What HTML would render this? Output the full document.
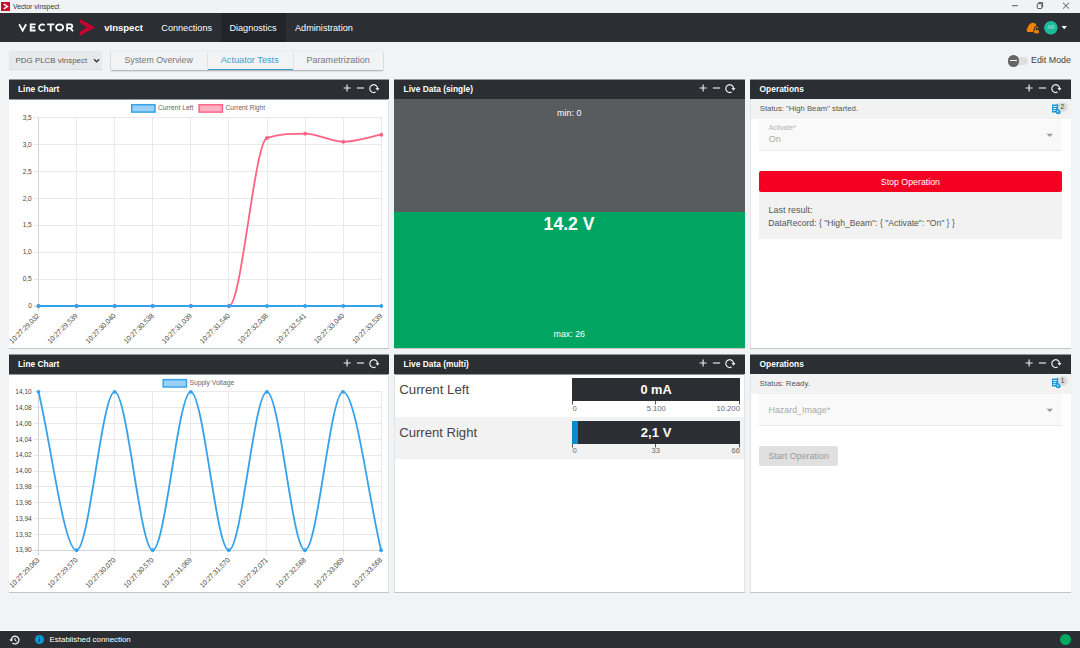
<!DOCTYPE html>
<html><head><meta charset="utf-8">
<style>
*{box-sizing:border-box}
html,body{margin:0;padding:0}
body{width:1080px;height:648px;overflow:hidden;position:relative;background:#f2f3f5;font-family:"Liberation Sans", sans-serif;}
.abs{position:absolute}
.t{position:absolute;white-space:nowrap;line-height:1}
.panel{position:absolute;background:#fff;border-bottom:1px solid #c4c4c4}
.pl{position:absolute;width:1px;background:#e2e3e5}
.ph{position:absolute;left:0;right:0;top:0;height:20px;background:#2b2e33;transform:translateY(0.5px)}
.ph .t{color:#fff;font-weight:bold;font-size:8.4px}
</style></head><body>
<!-- title bar -->
<div class="abs" style="left:0;top:0;width:1080px;height:13px;background:#f0f2f4"></div>
<div class="abs" style="left:1px;top:2px;width:9px;height:9px;background:#c8102e"></div>
<svg class="abs" style="left:1px;top:2px" width="9" height="9" viewBox="0 0 9 9"><path d="M2.8 2.2 L6.4 4.5 L2.8 6.8" fill="none" stroke="#fff" stroke-width="1.4"/></svg>
<div class="t" style="left:13px;top:3.9px;font-size:6.8px;color:#333">Vector vInspect</div>
<svg class="abs" style="left:1008px;top:0" width="72" height="13" viewBox="0 0 72 13">
 <path d="M4 5.7h5.8" stroke="#444" stroke-width="0.9"/>
 <rect x="29.3" y="3.7" width="4.6" height="4.8" rx="0.8" fill="none" stroke="#444" stroke-width="0.9"/>
 <path d="M30.6 3.2 v-0.6 h4 v4.4 h-0.6" fill="none" stroke="#444" stroke-width="0.9"/>
 <path d="M55 2.8 L61 8.6 M61 2.8 L55 8.6" stroke="#444" stroke-width="0.9"/>
</svg>
<!-- navbar -->
<div class="abs" style="left:0;top:13px;width:1080px;height:29px;background:#2b2e33"></div>
<div class="abs" style="left:221px;top:13px;width:65px;height:29px;background:#212428"></div>
<svg class="abs" style="left:0;top:13px" width="110" height="29" viewBox="0 13 110 29">
 <g fill="none" stroke="#fff" stroke-width="1.8" stroke-linejoin="miter">
  <path d="M19.2 24.2 L22.65 30.6 L26.1 24.2"/>
  <path d="M35.6 24.4 H30.7 V30.5 H35.6 M30.7 27.45 H35"/>
  <path d="M44.6 25.4 A3.1 3.1 0 1 0 44.6 29.5"/>
  <path d="M47.1 24.4 H54.3 M50.7 24.4 V31.3"/>
  <ellipse cx="59.6" cy="27.45" rx="3.55" ry="3.05"/>
  <path d="M67.1 31.3 V24.4 H70.4 A1.85 1.85 0 0 1 70.4 28.1 H67.1 M70 28.1 L73.1 31.2"/>
 </g>
 <path d="M79.6 18.8 L95.1 27.45 L79.6 36.1 L79.6 32.1 L86.9 27.45 L79.6 22.6 Z" fill="#c8002d"/>
</svg>
<div class="t" style="left:104.3px;top:23px;font-size:9.5px;font-weight:bold;color:#fff">vInspect</div>
<div class="t" style="left:161.3px;top:24.3px;font-size:9.15px;color:#fff">Connections</div>
<div class="t" style="left:229.4px;top:24.3px;font-size:9.15px;color:#fff">Diagnostics</div>
<div class="t" style="left:295px;top:24.3px;font-size:9.15px;color:#fff">Administration</div>
<svg class="abs" style="left:1024px;top:19px" width="46" height="18" viewBox="0 0 46 18">
 <path d="M4.2 12.9 C2.4 12.9 2.2 9.8 3.6 9.2 C3.9 6.8 5.3 4.6 7.8 3.9 C10.2 3.6 12.2 4.6 12.4 6.4 C12.2 8.2 11.2 9.6 10.6 10.4 L9.8 12.9 Z" fill="#f08300"/>
 <path d="M11.4 11.3 v-1.9 a1.35 1.35 0 0 1 2.7 0 v0.2" fill="none" stroke="#2b2e33" stroke-width="2.6"/>
 <rect x="10.2" y="11.2" width="4.7" height="3.1" fill="#2b2e33" stroke="#2b2e33" stroke-width="1.6"/>
 <path d="M11.4 11.3 v-1.9 a1.35 1.35 0 0 1 2.7 0 v0.2" fill="none" stroke="#f08300" stroke-width="1.0"/>
 <rect x="10.2" y="11.2" width="4.7" height="3.1" fill="#f08300"/>
 <circle cx="26.85" cy="8.65" r="6.75" fill="#1bbc9b"/>
 <path d="M37.5 7 L43 7 L40.25 10.2 Z" fill="#fff"/>
</svg>
<div class="t" style="left:1047.2px;top:25.3px;font-size:5.3px;color:#a6e4d6">AR</div>
<!-- sub bar -->
<div class="abs" style="left:9px;top:51px;width:93px;height:19px;background:#e8e9eb;border-bottom:1px solid #dcdde0"></div>
<div class="t" style="left:15.6px;top:57.4px;font-size:7.9px;color:#5c5c5c">PDG PLCB vInspect</div>
<svg class="abs" style="left:93px;top:58px" width="8" height="6" viewBox="0 0 8 6"><path d="M1 1.2 L3.6 3.8 L6.2 1.2" fill="none" stroke="#333" stroke-width="1.3"/></svg>
<div class="abs" style="left:111px;top:51px;width:272px;height:19px;background:#f2f3f5;box-shadow:0 1px 1.5px rgba(0,0,0,0.3),0 0 1px rgba(0,0,0,0.12)"></div>
<div class="abs" style="left:207px;top:51px;width:1px;height:19px;background:#e2e3e5"></div>
<div class="abs" style="left:293px;top:51px;width:1px;height:19px;background:#e2e3e5"></div>
<div class="abs" style="left:208px;top:68.5px;width:85px;height:1.6px;background:#3a9fd0"></div>
<div class="t" style="left:124.4px;top:56.2px;font-size:8.8px;color:#777">System Overview</div>
<div class="t" style="left:220.7px;top:56.2px;font-size:9.2px;color:#3a9fd0">Actuator Tests</div>
<div class="t" style="left:306.5px;top:56.2px;font-size:9.05px;color:#777">Parametrization</div>
<div class="abs" style="left:1008px;top:57px;width:20px;height:8px;border-radius:4px;background:#dfdfe0"></div>
<div class="abs" style="left:1007.8px;top:55.2px;width:11.4px;height:11.4px;border-radius:50%;background:#666"></div>
<div class="abs" style="left:1010.3px;top:60.3px;width:6.4px;height:1.2px;background:#fff"></div>
<div class="t" style="left:1031px;top:56.2px;font-size:8.9px;color:#444">Edit Mode</div>

<!-- panels row 1 -->
<div class="panel" style="left:9px;top:79px;width:380px;height:270px"><div class="ph"><div class="t" style="left:9px;top:4.8px">Line Chart</div></div></div>
<div class="panel" style="left:394px;top:79px;width:351px;height:270px"><div class="ph"><div class="t" style="left:9.6px;top:4.8px">Live Data (single)</div></div>
  <div class="abs" style="left:0;top:20px;width:351px;height:113px;background:#585c5f"></div>
  <div class="abs" style="left:0;top:133px;width:351px;height:136px;background:#00a562"></div>
</div>
<div class="panel" style="left:750px;top:79px;width:321px;height:270px"><div class="ph"><div class="t" style="left:9.6px;top:4.8px">Operations</div></div>
  <div class="abs" style="left:0;top:20px;width:321px;height:20px;background:#f2f2f2"></div>
</div>
<!-- panels row 2 -->
<div class="panel" style="left:9px;top:354px;width:380px;height:239px"><div class="ph"><div class="t" style="left:9px;top:4.8px">Line Chart</div></div></div>
<div class="panel" style="left:394px;top:354px;width:351px;height:239px"><div class="ph"><div class="t" style="left:9.6px;top:4.8px">Live Data (multi)</div></div>
  <div class="abs" style="left:0;top:63px;width:351px;height:42px;background:#f2f2f2"></div>
</div>
<div class="panel" style="left:750px;top:354px;width:321px;height:239px"><div class="ph"><div class="t" style="left:9.6px;top:4.8px">Operations</div></div>
  <div class="abs" style="left:0;top:20px;width:321px;height:20px;background:#f2f2f2"></div>
</div>

<svg class="abs" style="left:341px;top:80.4px" width="48" height="16" viewBox="341 80.4 48 16">
 <path d="M347.10 84.90v7M343.60 88.40h7" stroke="#eee" stroke-width="1.15"/>
 <path d="M356.90 88.40h7.2" stroke="#eee" stroke-width="1.15"/>
 <path d="M375.60 92.45 A3.9 3.9 0 1 1 377.60 88.70" fill="none" stroke="#eee" stroke-width="1.2"/>
 <path d="M375.50 88.40 L379.50 88.40 L377.50 91.10 Z" fill="#eee"/>
</svg>

<svg class="abs" style="left:697px;top:80.4px" width="48" height="16" viewBox="697 80.4 48 16">
 <path d="M703.10 84.90v7M699.60 88.40h7" stroke="#eee" stroke-width="1.15"/>
 <path d="M712.90 88.40h7.2" stroke="#eee" stroke-width="1.15"/>
 <path d="M731.60 92.45 A3.9 3.9 0 1 1 733.60 88.70" fill="none" stroke="#eee" stroke-width="1.2"/>
 <path d="M731.50 88.40 L735.50 88.40 L733.50 91.10 Z" fill="#eee"/>
</svg>

<svg class="abs" style="left:1023px;top:80.4px" width="48" height="16" viewBox="1023 80.4 48 16">
 <path d="M1029.10 84.90v7M1025.60 88.40h7" stroke="#eee" stroke-width="1.15"/>
 <path d="M1038.90 88.40h7.2" stroke="#eee" stroke-width="1.15"/>
 <path d="M1057.60 92.45 A3.9 3.9 0 1 1 1059.60 88.70" fill="none" stroke="#eee" stroke-width="1.2"/>
 <path d="M1057.50 88.40 L1061.50 88.40 L1059.50 91.10 Z" fill="#eee"/>
</svg>

<svg class="abs" style="left:341px;top:355.4px" width="48" height="16" viewBox="341 355.4 48 16">
 <path d="M347.10 359.90v7M343.60 363.40h7" stroke="#eee" stroke-width="1.15"/>
 <path d="M356.90 363.40h7.2" stroke="#eee" stroke-width="1.15"/>
 <path d="M375.60 367.45 A3.9 3.9 0 1 1 377.60 363.70" fill="none" stroke="#eee" stroke-width="1.2"/>
 <path d="M375.50 363.40 L379.50 363.40 L377.50 366.10 Z" fill="#eee"/>
</svg>

<svg class="abs" style="left:697px;top:355.4px" width="48" height="16" viewBox="697 355.4 48 16">
 <path d="M703.10 359.90v7M699.60 363.40h7" stroke="#eee" stroke-width="1.15"/>
 <path d="M712.90 363.40h7.2" stroke="#eee" stroke-width="1.15"/>
 <path d="M731.60 367.45 A3.9 3.9 0 1 1 733.60 363.70" fill="none" stroke="#eee" stroke-width="1.2"/>
 <path d="M731.50 363.40 L735.50 363.40 L733.50 366.10 Z" fill="#eee"/>
</svg>

<svg class="abs" style="left:1023px;top:355.4px" width="48" height="16" viewBox="1023 355.4 48 16">
 <path d="M1029.10 359.90v7M1025.60 363.40h7" stroke="#eee" stroke-width="1.15"/>
 <path d="M1038.90 363.40h7.2" stroke="#eee" stroke-width="1.15"/>
 <path d="M1057.60 367.45 A3.9 3.9 0 1 1 1059.60 363.70" fill="none" stroke="#eee" stroke-width="1.2"/>
 <path d="M1057.50 363.40 L1061.50 363.40 L1059.50 366.10 Z" fill="#eee"/>
</svg>

<div class="pl" style="left:388px;top:99px;height:249px"></div>
<div class="pl" style="left:750px;top:99px;height:249px"></div>
<div class="pl" style="left:388px;top:374px;height:218px"></div>
<div class="pl" style="left:394px;top:374px;height:218px"></div>
<div class="pl" style="left:744px;top:374px;height:218px"></div>
<div class="pl" style="left:750px;top:374px;height:218px"></div>
<!-- charts -->
<svg class="abs" style="left:0;top:0" width="1080" height="648" viewBox="0 0 1080 648" font-family='"Liberation Sans", sans-serif'>
<line x1="33.5" y1="117.5" x2="381.8" y2="117.5" stroke="#e9e9e9" stroke-width="1"/>
<line x1="33.5" y1="144.5" x2="381.8" y2="144.5" stroke="#e9e9e9" stroke-width="1"/>
<line x1="33.5" y1="171.5" x2="381.8" y2="171.5" stroke="#e9e9e9" stroke-width="1"/>
<line x1="33.5" y1="198.5" x2="381.8" y2="198.5" stroke="#e9e9e9" stroke-width="1"/>
<line x1="33.5" y1="225.5" x2="381.8" y2="225.5" stroke="#e9e9e9" stroke-width="1"/>
<line x1="33.5" y1="252.5" x2="381.8" y2="252.5" stroke="#e9e9e9" stroke-width="1"/>
<line x1="33.5" y1="279.5" x2="381.8" y2="279.5" stroke="#e9e9e9" stroke-width="1"/>
<line x1="33.5" y1="306.5" x2="381.8" y2="306.5" stroke="#e9e9e9" stroke-width="1"/>
<line x1="38.5" y1="117.0" x2="38.5" y2="311.0" stroke="#e9e9e9" stroke-width="1"/>
<line x1="76.5" y1="117.0" x2="76.5" y2="311.0" stroke="#e9e9e9" stroke-width="1"/>
<line x1="114.5" y1="117.0" x2="114.5" y2="311.0" stroke="#e9e9e9" stroke-width="1"/>
<line x1="152.5" y1="117.0" x2="152.5" y2="311.0" stroke="#e9e9e9" stroke-width="1"/>
<line x1="190.5" y1="117.0" x2="190.5" y2="311.0" stroke="#e9e9e9" stroke-width="1"/>
<line x1="228.5" y1="117.0" x2="228.5" y2="311.0" stroke="#e9e9e9" stroke-width="1"/>
<line x1="267.5" y1="117.0" x2="267.5" y2="311.0" stroke="#e9e9e9" stroke-width="1"/>
<line x1="305.5" y1="117.0" x2="305.5" y2="311.0" stroke="#e9e9e9" stroke-width="1"/>
<line x1="343.5" y1="117.0" x2="343.5" y2="311.0" stroke="#e9e9e9" stroke-width="1"/>
<line x1="381.5" y1="117.0" x2="381.5" y2="311.0" stroke="#e9e9e9" stroke-width="1"/>
<line x1="38.5" y1="117.0" x2="38.5" y2="311.0" stroke="#d4d4d4" stroke-width="1"/>
<line x1="33.5" y1="306.5" x2="381.8" y2="306.5" stroke="#d4d4d4" stroke-width="1"/>
<text x="31.8" y="119.7" text-anchor="end" font-size="7.3" fill="#4a4a4a" textLength="9.17" lengthAdjust="spacingAndGlyphs">3,5</text>
<text x="31.8" y="146.6" text-anchor="end" font-size="7.3" fill="#4a4a4a" textLength="9.17" lengthAdjust="spacingAndGlyphs">3,0</text>
<text x="31.8" y="173.6" text-anchor="end" font-size="7.3" fill="#4a4a4a" textLength="9.17" lengthAdjust="spacingAndGlyphs">2,5</text>
<text x="31.8" y="200.5" text-anchor="end" font-size="7.3" fill="#4a4a4a" textLength="9.17" lengthAdjust="spacingAndGlyphs">2,0</text>
<text x="31.8" y="227.4" text-anchor="end" font-size="7.3" fill="#4a4a4a" textLength="9.17" lengthAdjust="spacingAndGlyphs">1,5</text>
<text x="31.8" y="254.3" text-anchor="end" font-size="7.3" fill="#4a4a4a" textLength="9.17" lengthAdjust="spacingAndGlyphs">1,0</text>
<text x="31.8" y="281.3" text-anchor="end" font-size="7.3" fill="#4a4a4a" textLength="9.17" lengthAdjust="spacingAndGlyphs">0,5</text>
<text x="31.8" y="308.2" text-anchor="end" font-size="7.3" fill="#4a4a4a" textLength="3.67" lengthAdjust="spacingAndGlyphs">0</text>
<text transform="translate(40.0,316.3) rotate(-45)" text-anchor="end" font-size="7.2" fill="#444" textLength="39.11" lengthAdjust="spacingAndGlyphs">10:27:29,032</text>
<text transform="translate(78.1,316.3) rotate(-45)" text-anchor="end" font-size="7.2" fill="#444" textLength="39.11" lengthAdjust="spacingAndGlyphs">10:27:29,539</text>
<text transform="translate(116.2,316.3) rotate(-45)" text-anchor="end" font-size="7.2" fill="#444" textLength="39.11" lengthAdjust="spacingAndGlyphs">10:27:30,040</text>
<text transform="translate(154.3,316.3) rotate(-45)" text-anchor="end" font-size="7.2" fill="#444" textLength="39.11" lengthAdjust="spacingAndGlyphs">10:27:30,538</text>
<text transform="translate(192.4,316.3) rotate(-45)" text-anchor="end" font-size="7.2" fill="#444" textLength="39.11" lengthAdjust="spacingAndGlyphs">10:27:31,039</text>
<text transform="translate(230.4,316.3) rotate(-45)" text-anchor="end" font-size="7.2" fill="#444" textLength="39.11" lengthAdjust="spacingAndGlyphs">10:27:31,540</text>
<text transform="translate(268.5,316.3) rotate(-45)" text-anchor="end" font-size="7.2" fill="#444" textLength="39.11" lengthAdjust="spacingAndGlyphs">10:27:32,038</text>
<text transform="translate(306.6,316.3) rotate(-45)" text-anchor="end" font-size="7.2" fill="#444" textLength="39.11" lengthAdjust="spacingAndGlyphs">10:27:32,541</text>
<text transform="translate(344.7,316.3) rotate(-45)" text-anchor="end" font-size="7.2" fill="#444" textLength="39.11" lengthAdjust="spacingAndGlyphs">10:27:33,040</text>
<text transform="translate(382.8,316.3) rotate(-45)" text-anchor="end" font-size="7.2" fill="#444" textLength="39.11" lengthAdjust="spacingAndGlyphs">10:27:33,539</text>
<path d="M38.50,306.00 C51.20,306.00 63.89,306.00 76.59,306.00 C89.29,306.00 101.98,306.00 114.68,306.00 C127.37,306.00 140.07,306.00 152.77,306.00 C165.46,306.00 178.16,306.00 190.86,306.00 C203.55,306.00 216.25,306.00 228.94,306.00 C241.64,306.00 254.34,142.27 267.03,137.97 C279.73,133.66 292.43,133.66 305.12,133.66 C317.82,133.66 330.51,141.74 343.21,141.74 C355.91,141.74 368.60,137.07 381.30,134.73" fill="none" stroke="#ff6384" stroke-width="1.8"/>
<circle cx="38.50" cy="306.00" r="1.9" fill="#ff6384"/>
<circle cx="76.59" cy="306.00" r="1.9" fill="#ff6384"/>
<circle cx="114.68" cy="306.00" r="1.9" fill="#ff6384"/>
<circle cx="152.77" cy="306.00" r="1.9" fill="#ff6384"/>
<circle cx="190.86" cy="306.00" r="1.9" fill="#ff6384"/>
<circle cx="228.94" cy="306.00" r="1.9" fill="#ff6384"/>
<circle cx="267.03" cy="137.97" r="1.9" fill="#ff6384"/>
<circle cx="305.12" cy="133.66" r="1.9" fill="#ff6384"/>
<circle cx="343.21" cy="141.74" r="1.9" fill="#ff6384"/>
<circle cx="381.30" cy="134.73" r="1.9" fill="#ff6384"/>
<path d="M38.50,306.00 C51.20,306.00 63.89,306.00 76.59,306.00 C89.29,306.00 101.98,306.00 114.68,306.00 C127.37,306.00 140.07,306.00 152.77,306.00 C165.46,306.00 178.16,306.00 190.86,306.00 C203.55,306.00 216.25,306.00 228.94,306.00 C241.64,306.00 254.34,306.00 267.03,306.00 C279.73,306.00 292.43,306.00 305.12,306.00 C317.82,306.00 330.51,306.00 343.21,306.00 C355.91,306.00 368.60,306.00 381.30,306.00" fill="none" stroke="#36a2eb" stroke-width="1.8"/>
<circle cx="38.50" cy="306.00" r="1.9" fill="#36a2eb"/>
<circle cx="76.59" cy="306.00" r="1.9" fill="#36a2eb"/>
<circle cx="114.68" cy="306.00" r="1.9" fill="#36a2eb"/>
<circle cx="152.77" cy="306.00" r="1.9" fill="#36a2eb"/>
<circle cx="190.86" cy="306.00" r="1.9" fill="#36a2eb"/>
<circle cx="228.94" cy="306.00" r="1.9" fill="#36a2eb"/>
<circle cx="267.03" cy="306.00" r="1.9" fill="#36a2eb"/>
<circle cx="305.12" cy="306.00" r="1.9" fill="#36a2eb"/>
<circle cx="343.21" cy="306.00" r="1.9" fill="#36a2eb"/>
<circle cx="381.30" cy="306.00" r="1.9" fill="#36a2eb"/>
<rect x="131.7" y="104.7" width="23.3" height="7.4" fill="rgba(54,162,235,0.5)" stroke="#36a2eb" stroke-width="1.5"/>
<text x="158.0" y="109.9" font-size="6.7" fill="#666">Current Left</text>
<rect x="199.1" y="104.7" width="23.3" height="7.4" fill="rgba(255,99,132,0.5)" stroke="#ff6384" stroke-width="1.5"/>
<text x="225.4" y="109.9" font-size="6.7" fill="#666">Current Right</text>
<line x1="33.5" y1="391.5" x2="381.6" y2="391.5" stroke="#e9e9e9" stroke-width="1"/>
<line x1="33.5" y1="407.5" x2="381.6" y2="407.5" stroke="#e9e9e9" stroke-width="1"/>
<line x1="33.5" y1="423.5" x2="381.6" y2="423.5" stroke="#e9e9e9" stroke-width="1"/>
<line x1="33.5" y1="439.5" x2="381.6" y2="439.5" stroke="#e9e9e9" stroke-width="1"/>
<line x1="33.5" y1="455.5" x2="381.6" y2="455.5" stroke="#e9e9e9" stroke-width="1"/>
<line x1="33.5" y1="471.5" x2="381.6" y2="471.5" stroke="#e9e9e9" stroke-width="1"/>
<line x1="33.5" y1="486.5" x2="381.6" y2="486.5" stroke="#e9e9e9" stroke-width="1"/>
<line x1="33.5" y1="502.5" x2="381.6" y2="502.5" stroke="#e9e9e9" stroke-width="1"/>
<line x1="33.5" y1="518.5" x2="381.6" y2="518.5" stroke="#e9e9e9" stroke-width="1"/>
<line x1="33.5" y1="534.5" x2="381.6" y2="534.5" stroke="#e9e9e9" stroke-width="1"/>
<line x1="33.5" y1="550.5" x2="381.6" y2="550.5" stroke="#e9e9e9" stroke-width="1"/>
<line x1="38.5" y1="391.3" x2="38.5" y2="555.2" stroke="#e9e9e9" stroke-width="1"/>
<line x1="76.5" y1="391.3" x2="76.5" y2="555.2" stroke="#e9e9e9" stroke-width="1"/>
<line x1="114.5" y1="391.3" x2="114.5" y2="555.2" stroke="#e9e9e9" stroke-width="1"/>
<line x1="152.5" y1="391.3" x2="152.5" y2="555.2" stroke="#e9e9e9" stroke-width="1"/>
<line x1="190.5" y1="391.3" x2="190.5" y2="555.2" stroke="#e9e9e9" stroke-width="1"/>
<line x1="228.5" y1="391.3" x2="228.5" y2="555.2" stroke="#e9e9e9" stroke-width="1"/>
<line x1="266.5" y1="391.3" x2="266.5" y2="555.2" stroke="#e9e9e9" stroke-width="1"/>
<line x1="304.5" y1="391.3" x2="304.5" y2="555.2" stroke="#e9e9e9" stroke-width="1"/>
<line x1="343.5" y1="391.3" x2="343.5" y2="555.2" stroke="#e9e9e9" stroke-width="1"/>
<line x1="381.5" y1="391.3" x2="381.5" y2="555.2" stroke="#e9e9e9" stroke-width="1"/>
<line x1="38.5" y1="391.3" x2="38.5" y2="555.2" stroke="#d4d4d4" stroke-width="1"/>
<line x1="33.5" y1="550.5" x2="381.6" y2="550.5" stroke="#d4d4d4" stroke-width="1"/>
<text x="31.8" y="394.0" text-anchor="end" font-size="7.3" fill="#4a4a4a" textLength="16.51" lengthAdjust="spacingAndGlyphs">14,10</text>
<text x="31.8" y="409.8" text-anchor="end" font-size="7.3" fill="#4a4a4a" textLength="16.51" lengthAdjust="spacingAndGlyphs">14,08</text>
<text x="31.8" y="425.7" text-anchor="end" font-size="7.3" fill="#4a4a4a" textLength="16.51" lengthAdjust="spacingAndGlyphs">14,06</text>
<text x="31.8" y="441.5" text-anchor="end" font-size="7.3" fill="#4a4a4a" textLength="16.51" lengthAdjust="spacingAndGlyphs">14,04</text>
<text x="31.8" y="457.4" text-anchor="end" font-size="7.3" fill="#4a4a4a" textLength="16.51" lengthAdjust="spacingAndGlyphs">14,02</text>
<text x="31.8" y="473.2" text-anchor="end" font-size="7.3" fill="#4a4a4a" textLength="16.51" lengthAdjust="spacingAndGlyphs">14,00</text>
<text x="31.8" y="489.0" text-anchor="end" font-size="7.3" fill="#4a4a4a" textLength="16.51" lengthAdjust="spacingAndGlyphs">13,98</text>
<text x="31.8" y="504.9" text-anchor="end" font-size="7.3" fill="#4a4a4a" textLength="16.51" lengthAdjust="spacingAndGlyphs">13,96</text>
<text x="31.8" y="520.7" text-anchor="end" font-size="7.3" fill="#4a4a4a" textLength="16.51" lengthAdjust="spacingAndGlyphs">13,94</text>
<text x="31.8" y="536.6" text-anchor="end" font-size="7.3" fill="#4a4a4a" textLength="16.51" lengthAdjust="spacingAndGlyphs">13,92</text>
<text x="31.8" y="552.4" text-anchor="end" font-size="7.3" fill="#4a4a4a" textLength="16.51" lengthAdjust="spacingAndGlyphs">13,90</text>
<text transform="translate(40.0,560.5) rotate(-45)" text-anchor="end" font-size="7.2" fill="#444" textLength="39.11" lengthAdjust="spacingAndGlyphs">10:27:29,063</text>
<text transform="translate(78.1,560.5) rotate(-45)" text-anchor="end" font-size="7.2" fill="#444" textLength="39.11" lengthAdjust="spacingAndGlyphs">10:27:29,570</text>
<text transform="translate(116.1,560.5) rotate(-45)" text-anchor="end" font-size="7.2" fill="#444" textLength="39.11" lengthAdjust="spacingAndGlyphs">10:27:30,070</text>
<text transform="translate(154.2,560.5) rotate(-45)" text-anchor="end" font-size="7.2" fill="#444" textLength="39.11" lengthAdjust="spacingAndGlyphs">10:27:30,570</text>
<text transform="translate(192.3,560.5) rotate(-45)" text-anchor="end" font-size="7.2" fill="#444" textLength="39.11" lengthAdjust="spacingAndGlyphs">10:27:31,069</text>
<text transform="translate(230.3,560.5) rotate(-45)" text-anchor="end" font-size="7.2" fill="#444" textLength="39.11" lengthAdjust="spacingAndGlyphs">10:27:31,570</text>
<text transform="translate(268.4,560.5) rotate(-45)" text-anchor="end" font-size="7.2" fill="#444" textLength="39.11" lengthAdjust="spacingAndGlyphs">10:27:32,071</text>
<text transform="translate(306.5,560.5) rotate(-45)" text-anchor="end" font-size="7.2" fill="#444" textLength="39.11" lengthAdjust="spacingAndGlyphs">10:27:32,568</text>
<text transform="translate(344.5,560.5) rotate(-45)" text-anchor="end" font-size="7.2" fill="#444" textLength="39.11" lengthAdjust="spacingAndGlyphs">10:27:33,069</text>
<text transform="translate(382.6,560.5) rotate(-45)" text-anchor="end" font-size="7.2" fill="#444" textLength="39.11" lengthAdjust="spacingAndGlyphs">10:27:33,568</text>
<path d="M38.50,391.80 C51.19,444.60 63.88,550.20 76.57,550.20 C89.26,550.20 101.94,391.80 114.63,391.80 C127.32,391.80 140.01,550.20 152.70,550.20 C165.39,550.20 178.08,391.80 190.77,391.80 C203.46,391.80 216.14,550.20 228.83,550.20 C241.52,550.20 254.21,391.80 266.90,391.80 C279.59,391.80 292.28,550.20 304.97,550.20 C317.66,550.20 330.34,391.80 343.03,391.80 C355.72,391.80 368.41,497.40 381.10,550.20" fill="none" stroke="#36a2eb" stroke-width="1.8"/>
<circle cx="38.50" cy="391.80" r="1.9" fill="#36a2eb"/>
<circle cx="76.57" cy="550.20" r="1.9" fill="#36a2eb"/>
<circle cx="114.63" cy="391.80" r="1.9" fill="#36a2eb"/>
<circle cx="152.70" cy="550.20" r="1.9" fill="#36a2eb"/>
<circle cx="190.77" cy="391.80" r="1.9" fill="#36a2eb"/>
<circle cx="228.83" cy="550.20" r="1.9" fill="#36a2eb"/>
<circle cx="266.90" cy="391.80" r="1.9" fill="#36a2eb"/>
<circle cx="304.97" cy="550.20" r="1.9" fill="#36a2eb"/>
<circle cx="343.03" cy="391.80" r="1.9" fill="#36a2eb"/>
<circle cx="381.10" cy="550.20" r="1.9" fill="#36a2eb"/>
<rect x="163.2" y="379.6" width="23.3" height="7.4" fill="rgba(54,162,235,0.5)" stroke="#36a2eb" stroke-width="1.5"/>
<text x="189.5" y="384.8" font-size="6.7" fill="#666">Supply Voltage</text>
</svg>

<!-- live single -->
<div class="t" style="left:557px;top:108.6px;font-size:8.97px;color:#fff">min: 0</div>
<div class="t" style="left:543.6px;top:216.4px;font-size:17.6px;font-weight:bold;color:#fff">14.2 V</div>
<div class="t" style="left:553.6px;top:330.2px;font-size:8.83px;color:#fff">max: 26</div>

<!-- live multi -->
<div class="t" style="left:399.2px;top:382.6px;font-size:13.25px;color:#444">Current Left</div>
<div class="t" style="left:399.2px;top:425.9px;font-size:13.1px;color:#444">Current Right</div>
<div class="abs" style="left:572px;top:378px;width:168px;height:23px;background:#2b2e33"></div>
<div class="abs" style="left:572px;top:421px;width:168px;height:23px;background:#2b2e33"></div>
<div class="abs" style="left:572px;top:421px;width:6px;height:23px;background:#0a8ac8"></div>
<div class="t" style="left:640.4px;top:384.1px;font-size:12.8px;font-weight:bold;color:#fff">0 mA</div>
<div class="t" style="left:640.8px;top:426px;font-size:13.1px;font-weight:bold;color:#fff">2,1 V</div>
<svg class="abs" style="left:0;top:0" width="1080" height="648" viewBox="0 0 1080 648">
 <path d="M572.5 401v3.5 M655.5 401v3.5 M739.5 401v3.5 M572.5 444v3.5 M655.5 444v3.5 M739.5 444v3.5" stroke="#555" stroke-width="1"/>
</svg>
<div class="t" style="left:572.5px;top:404.6px;font-size:7.6px;color:#666">0</div>
<div class="t" style="left:646.7px;top:404.6px;font-size:7.6px;color:#666">5.100</div>
<div class="t" style="left:716.4px;top:404.6px;font-size:7.7px;color:#666">10.200</div>
<div class="t" style="left:572.5px;top:447.4px;font-size:7.6px;color:#666">0</div>
<div class="t" style="left:651.6px;top:447.4px;font-size:7.6px;color:#666">33</div>
<div class="t" style="left:731.6px;top:447.4px;font-size:7.6px;color:#666">66</div>

<!-- operations 1 -->
<div class="t" style="left:759.8px;top:105.2px;font-size:7.75px;color:#555">Status: "High Beam" started.</div>
<div class="abs" style="left:759px;top:119.5px;width:303px;height:31.5px;background:#f9f9f9;border-bottom:1px solid #ececec"></div>
<div class="t" style="left:768.7px;top:124.6px;font-size:6.9px;color:#b0b0b0">Activate*</div>
<div class="t" style="left:768.7px;top:135px;font-size:9px;color:#a8a8a8">On</div>
<svg class="abs" style="left:1046px;top:133px" width="8" height="5" viewBox="0 0 8 5"><path d="M0.5 0.8 L7 0.8 L3.75 4 Z" fill="#999"/></svg>
<div class="abs" style="left:759.3px;top:171.3px;width:302.7px;height:20.3px;background:#f50023;border-radius:2px"></div>
<div class="t" style="left:880.8px;top:177.8px;font-size:8.8px;color:#fff">Stop Operation</div>
<div class="abs" style="left:759.3px;top:191.6px;width:302.7px;height:47.4px;background:#f2f2f2"></div>
<div class="t" style="left:768.6px;top:206.3px;font-size:8.96px;color:#555">Last result:</div>
<div class="t" style="left:768.3px;top:218.9px;font-size:8.6px;color:#555">DataRecord: { "High_Beam": { "Activate": "On" } }</div>

<!-- operations 2 -->
<div class="t" style="left:759.6px;top:379.9px;font-size:7.75px;color:#555">Status: Ready.</div>
<div class="abs" style="left:759px;top:394px;width:303px;height:32px;background:#f9f9f9;border-bottom:1px solid #ececec"></div>
<div class="t" style="left:768.5px;top:406px;font-size:8.9px;color:#aaa">Hazard_Image*</div>
<svg class="abs" style="left:1046px;top:408px" width="8" height="5" viewBox="0 0 8 5"><path d="M0.5 0.8 L7 0.8 L3.75 4 Z" fill="#999"/></svg>
<div class="abs" style="left:759.3px;top:446px;width:78.6px;height:19.8px;background:#e0e0e0;border-radius:2px"></div>
<div class="t" style="left:768.5px;top:451.6px;font-size:8.92px;color:#999">Start Operation</div>

<!-- badge icons -->
<svg class="abs" style="left:1050px;top:100px" width="20" height="16" viewBox="0 0 20 16">
 <path d="M2 4.6 h4.6 l1.4 -1.3 l0.4 1.5 v7.6 h-6.4 Z" fill="#1a96d6"/>
 <circle cx="8.2" cy="11.7" r="2.5" fill="#1a96d6"/>
 <path d="M3.2 6.5h3.6 M3.2 8.6h3 M3.2 10.5h2.2" stroke="#fff" stroke-width="0.9"/>
 <path d="M7.4 10.5 v1.4 h1.4" fill="none" stroke="#fff" stroke-width="0.8"/>
 <circle cx="12.9" cy="7" r="4.7" fill="#dadada"/>
</svg>
<div class="t" style="left:1060.6px;top:103.6px;font-size:6.6px;color:#444">2</div>
<svg class="abs" style="left:1050px;top:374px" width="20" height="16" viewBox="0 0 20 16">
 <path d="M2 4.6 h4.6 l1.4 -1.3 l0.4 1.5 v7.6 h-6.4 Z" fill="#1a96d6"/>
 <circle cx="8.2" cy="11.7" r="2.5" fill="#1a96d6"/>
 <path d="M3.2 6.5h3.6 M3.2 8.6h3 M3.2 10.5h2.2" stroke="#fff" stroke-width="0.9"/>
 <path d="M7.4 10.5 v1.4 h1.4" fill="none" stroke="#fff" stroke-width="0.8"/>
 <circle cx="12.9" cy="7" r="4.7" fill="#dadada"/>
</svg>
<div class="t" style="left:1060.8px;top:377.6px;font-size:6.6px;color:#444">1</div>

<!-- status bar -->
<div class="abs" style="left:0;top:630px;width:1080px;height:18px;background:#2b2e33;border-top:0.5px solid #fff"></div>
<svg class="abs" style="left:8px;top:634px" width="14" height="12" viewBox="0 0 14 12">
 <path d="M3.2 6 A3.9 3.9 0 1 1 4.4 8.9" fill="none" stroke="#fff" stroke-width="1.2"/>
 <path d="M1.2 5.4 L3.2 7.6 L5.2 5.4 Z" fill="#fff"/>
 <path d="M7 4v2.2l1.6 1.2" fill="none" stroke="#fff" stroke-width="1"/>
</svg>
<div class="abs" style="left:34.7px;top:634.5px;width:9.4px;height:9.4px;border-radius:50%;background:#0a96d2"></div>
<div class="abs" style="left:38.9px;top:638.6px;width:1.1px;height:3.3px;background:#2b2e33"></div>
<div class="abs" style="left:38.9px;top:636.9px;width:1.1px;height:1.1px;background:#2b2e33"></div>
<div class="t" style="left:49.6px;top:636.1px;font-size:7.9px;color:#fff">Established connection</div>
<div class="abs" style="left:1059.8px;top:633.8px;width:11px;height:11px;border-radius:50%;background:#00a862"></div>
</body></html>
